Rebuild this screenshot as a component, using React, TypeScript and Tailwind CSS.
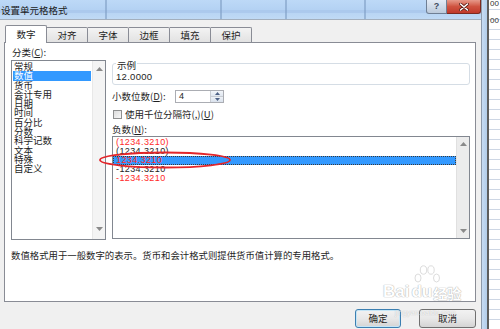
import React from "react";

const categories = ["常规", "数值", "货币", "会计专用", "日期", "时间", "百分比", "分数", "科学记数", "文本", "特殊", "自定义"];

const negatives: { t: string; red: boolean; sel?: boolean }[] = [
  { t: "(1234.3210)", red: true },
  { t: "(1234.3210)", red: false },
  { t: "1234.3210", red: true, sel: true },
  { t: "-1234.3210", red: false },
  { t: "-1234.3210", red: true },
];

function UpArrow() {
  return (
    <svg width="7" height="4" viewBox="0 0 7 4">
      <path d="M0 4 L3.5 0 L7 4 Z" fill="#8a8a8a" />
    </svg>
  );
}
function DownArrow() {
  return (
    <svg width="7" height="4" viewBox="0 0 7 4">
      <path d="M0 0 L3.5 4 L7 0 Z" fill="#8a8a8a" />
    </svg>
  );
}

export default function App() {
  return (
    <div className="relative w-[500px] h-[329px] overflow-hidden flex bg-white font-['Noto_Sans_CJK_SC',sans-serif] text-[9.5px] text-[#1e1e1e]">
      {/* Dialog */}
      <div className="w-[482px] h-full flex flex-col bg-[#f0f0f0] border-r border-[#8d9aab]">
        {/* Title bar */}
        <div className="relative h-[20px] shrink-0 flex items-start bg-gradient-to-b from-[#bdd9f7] via-[#b4d2f3] to-[#c0daf5] border-b border-[#a3afbd]">
          <div className="absolute left-0 right-0 top-[10px] h-[3px] bg-[#a6c5ea] opacity-70" />
          <div className="absolute top-0 bottom-0 left-[105px] w-[2px] bg-[#7f9fc4] opacity-60" />
          <div className="absolute top-0 bottom-0 left-[220px] w-[2px] bg-[#7f9fc4] opacity-60" />
          <div className="absolute top-0 bottom-0 left-[285px] w-[2px] bg-[#7f9fc4] opacity-60" />
          <div className="absolute top-0 bottom-0 left-[364px] w-[2px] bg-[#7f9fc4] opacity-60" />
          <span className="relative pl-[1px] pt-[4px] leading-[12px] text-[9.5px] text-[#1a1a1a]">设置单元格格式</span>
          <div className="relative ml-auto flex">
            <div className="w-[21px] h-[14px] flex items-center justify-center rounded-bl-[3px] border border-t-0 border-[#6f7f94] bg-gradient-to-b from-[#e3ebf5] to-[#bccadb] text-[9px] font-bold text-[#3c4a5c] font-['Liberation_Sans',sans-serif]">
              ?
            </div>
            <div className="w-[34px] h-[14px] flex items-center justify-center rounded-br-[3px] border border-t-0 border-l-0 border-[#7c2a20] bg-gradient-to-b from-[#e6998a] via-[#cf5340] to-[#c0392b]">
              <svg width="10" height="8" viewBox="0 0 10 8">
                <path d="M1.5 1 L8.5 7 M8.5 1 L1.5 7" stroke="#5a1a12" strokeWidth="3" strokeLinecap="round" />
                <path d="M1.5 1 L8.5 7 M8.5 1 L1.5 7" stroke="#ffffff" strokeWidth="1.6" strokeLinecap="round" />
              </svg>
            </div>
          </div>
        </div>

        {/* Body */}
        <div className="flex-1 flex flex-col pl-[4px] pr-[5px] pt-[5px]">
          {/* Tabs */}
          <div className="relative z-10 flex items-end h-[17px] pl-[1px]">
            <div className="w-[42px] h-[18px] -mb-[1px] flex items-center justify-center bg-white border border-b-0 border-[#898c95] rounded-t-[2px]">
              数字
            </div>
            {["对齐", "字体", "边框", "填充", "保护"].map((t) => (
              <div
                key={t}
                className="w-[41px] h-[15px] flex items-center justify-center bg-gradient-to-b from-[#f3f3f3] to-[#e2e2e2] border border-l-0 border-b-0 border-[#898c95] rounded-tr-[2px]"
              >
                {t}
              </div>
            ))}
          </div>

          {/* Panel */}
          <div className="h-[260px] shrink-0 border border-[#898c95] bg-white flex flex-col pl-[6px] pr-[5px] pt-[4px]">
            <div className="h-[10px] leading-[10px] pl-[1px]">
              分类(<span className="underline">C</span>):
            </div>
            <div className="mt-[3px] flex">
              {/* Category list */}
              <div className="w-[95px] h-[180px] border border-[#828790] bg-white flex">
                <div className="flex-1 flex flex-col pt-[1px]">
                  {categories.map((c, i) => (
                    <div
                      key={c}
                      className={
                        i === 1
                          ? "h-[9.3px] leading-[9.3px] mx-[1px] pl-[1px] bg-[#3399ff] text-white whitespace-nowrap"
                          : "h-[9.3px] leading-[9.3px] pl-[2px] whitespace-nowrap"
                      }
                    >
                      {c}
                    </div>
                  ))}
                </div>
                <div className="w-[13px] bg-[#f4f4f4] border-l border-[#e8e8e8] flex flex-col items-center justify-between pt-[6px] pb-[8px]">
                  <UpArrow />
                  <DownArrow />
                </div>
              </div>

              {/* Right column */}
              <div className="ml-[6px] flex-1 flex flex-col">
                {/* Sample fieldset */}
                <div className="relative mt-[3px] h-[22px] border border-[#d5dde5] rounded-[3px] pl-[3px] pt-[8px]">
                  <span className="absolute left-[3px] -top-[4px] h-[10px] leading-[10px] bg-white px-[1px] text-[#1e1e1e]">示例</span>
                  <div className="leading-[10px] font-['Liberation_Sans',sans-serif] text-[9.5px] tracking-[0.3px]">12.0000</div>
                </div>

                {/* Decimal places */}
                <div className="mt-[5px] h-[13px] flex items-center">
                  <div className="w-[63px] leading-[13px] whitespace-nowrap">
                    小数位数(<span className="underline">D</span>):
                  </div>
                  <div className="w-[49px] h-[13px] border border-[#abadb3] bg-white flex">
                    <div className="flex-1 pl-[3px] leading-[11px] font-['Liberation_Sans',sans-serif] text-[9px]">4</div>
                    <div className="w-[13px] flex flex-col border-l border-[#c8ccd3]">
                      <div className="flex-1 flex items-center justify-center bg-gradient-to-b from-[#f3f6fa] to-[#dfe6ef] border-b border-[#c8ccd3]">
                        <svg width="5" height="3" viewBox="0 0 5 3"><path d="M0 3 L2.5 0 L5 3 Z" fill="#4d6185" /></svg>
                      </div>
                      <div className="flex-1 flex items-center justify-center bg-gradient-to-b from-[#eef2f7] to-[#d9e1ec]">
                        <svg width="5" height="3" viewBox="0 0 5 3"><path d="M0 0 L2.5 3 L5 0 Z" fill="#4d6185" /></svg>
                      </div>
                    </div>
                  </div>
                </div>

                {/* Checkbox */}
                <div className="mt-[6px] h-[11px] flex items-center">
                  <div className="ml-[1px] w-[9px] h-[9px] border border-[#8e8f8f] bg-gradient-to-br from-[#dcdcdc] to-[#f7f7f7]" />
                  <span className="ml-[3px] leading-[11px] whitespace-nowrap">
                    使用千位分隔符(,)(<span className="underline">U</span>)
                  </span>
                </div>

                {/* Negative label */}
                <div className="mt-[4px] h-[10px] leading-[10px]">
                  负数(<span className="underline">N</span>):
                </div>

                {/* Negative list */}
                <div className="mt-[2px] h-[103px] border border-[#828790] bg-white flex">
                  <div className="flex-1 flex flex-col pt-[1px] font-['Liberation_Sans',sans-serif] text-[9px] tracking-[0.4px]">
                    {negatives.map((n, i) => (
                      <div
                        key={i}
                        className={
                          (n.sel
                            ? "bg-[#3399ff] border border-dotted border-[#3a3a3a] pl-[2px] leading-[7px] "
                            : "pl-[3px] leading-[9px] ") +
                          "h-[9px] whitespace-nowrap " +
                          (n.red ? "text-[#ff2a2a]" : "text-[#222222]")
                        }
                      >
                        {n.t}
                      </div>
                    ))}
                  </div>
                  <div className="w-[13px] bg-[#ececec] border-l border-[#e0e0e0] flex flex-col items-center justify-between pt-[5px] pb-[5px]">
                    <UpArrow />
                    <DownArrow />
                  </div>
                </div>
              </div>
            </div>

            <div className="mt-[10px] leading-[10px] text-[9.4px] whitespace-nowrap">
              数值格式用于一般数字的表示。货币和会计格式则提供货币值计算的专用格式。
            </div>
          </div>

          {/* Buttons */}
          <div className="mt-[7px] flex justify-end">
            <div className="w-[46px] h-[19px] flex items-center justify-center rounded-[3px] border border-[#3c7fb1] bg-gradient-to-b from-[#f2f2f2] via-[#e8e8e8] to-[#d4d4d4] shadow-[inset_0_0_0_1px_#c4e5f6]">
              确定
            </div>
            <div className="ml-[18px] w-[57px] h-[19px] flex items-center justify-center rounded-[3px] border border-[#707070] bg-gradient-to-b from-[#f2f2f2] via-[#e8e8e8] to-[#d4d4d4]">
              取消
            </div>
          </div>
        </div>
      </div>

      {/* Right edge: window frame + spreadsheet behind */}
      <div className="w-[5px] h-full bg-gradient-to-r from-[#c7dcf3] to-[#b2cdea]" />
      <div className="w-[2px] h-full bg-[#5e5e5e]" />
      <div className="flex-1 h-full flex flex-col bg-[repeating-linear-gradient(to_bottom,#ffffff_0px,#ffffff_9px,#cdd6e4_9px,#cdd6e4_10px)]">
        <div className="h-[10px] leading-[8px] pl-[1px] text-[8px] font-['Liberation_Sans',sans-serif] text-[#333] overflow-hidden">00</div>
        <div className="h-[10px] mt-[6px] leading-[10px] pl-[1px] text-[8px] font-['Liberation_Sans',sans-serif] text-[#333] overflow-hidden">00</div>
      </div>

      {/* Red annotation ellipse */}
      <svg className="absolute left-[98px] top-[150px]" width="136" height="20" viewBox="0 0 136 20">
        <ellipse cx="67" cy="10" rx="65" ry="7.5" fill="none" stroke="#e3262b" strokeWidth="1.8" />
      </svg>

      {/* Baidu watermark */}
      <div className="absolute left-[383px] top-[263px] w-[95px] h-[60px] opacity-80 pointer-events-none">
        <svg className="absolute left-[31px] top-[2px]" width="26" height="22" viewBox="0 0 26 22">
          <g fill="#ffffff" stroke="#c9c9c9" strokeWidth="0.8">
            <ellipse cx="4" cy="13" rx="3" ry="4" />
            <ellipse cx="9.5" cy="5" rx="3.2" ry="4.2" />
            <ellipse cx="17" cy="5" rx="3.2" ry="4.2" />
            <ellipse cx="22.5" cy="13" rx="3" ry="4" />
          </g>
        </svg>
        <div className="absolute left-0 top-[20px] flex items-end font-['Liberation_Sans',sans-serif] font-bold text-white [text-shadow:0_0_1px_#9a9a9a,0_0_1px_#9a9a9a]">
          <span className="text-[17px] leading-[18px]">Bai</span>
          <span className="ml-[2px] text-[17px] leading-[18px]">du</span>
          <span className="ml-[1px] text-[14px] leading-[16px] font-['Noto_Sans_CJK_SC',sans-serif] font-bold">经验</span>
        </div>
        <div className="absolute left-[12px] top-[46px] text-[7.5px] leading-[8px] text-white font-['Liberation_Sans',sans-serif] [text-shadow:0_0_1px_#8a8a8a] opacity-80">
          jingyan.baidu.com
        </div>
      </div>
    </div>
  );
}
